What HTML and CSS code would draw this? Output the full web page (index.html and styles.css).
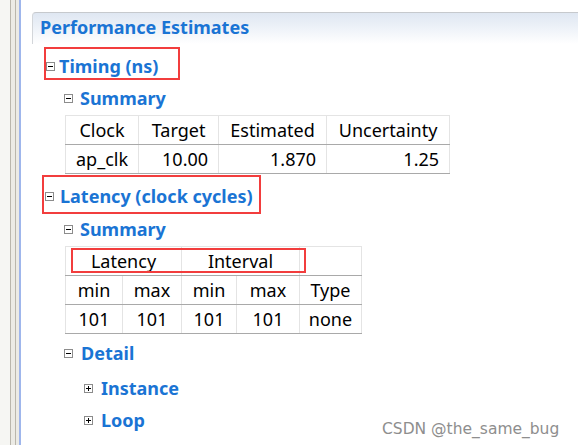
FILE: index.html
```html
<!DOCTYPE html>
<html>
<head>
<meta charset="utf-8">
<link rel="stylesheet" href="styles.css">
</head>
<body>
<div class="page">
  <div class="gutter"></div>
  <div class="main">
    <div class="panel-head"><h1 class="title">Performance Estimates</h1></div>

    <div class="h2 mark mark-timing">
      <svg class="tog" viewBox="0 0 9 9" width="9" height="9"><rect x="0.5" y="0.5" width="8" height="8" fill="#fff" stroke="#8c8c8c"/><path d="M2 4.5H7" stroke="#000"/></svg>
      <span>Timing (ns)</span>
    </div>
    <div class="h3 sum1">
      <svg class="tog" viewBox="0 0 9 9" width="9" height="9"><rect x="0.5" y="0.5" width="8" height="8" fill="#fff" stroke="#8c8c8c"/><path d="M2 4.5H7" stroke="#000"/></svg>
      <span>Summary</span>
    </div>
    <table class="grid timing">
      <tr><td class="t1">Clock</td><td class="t2">Target</td><td class="t3">Estimated</td><td class="t4">Uncertainty</td></tr>
      <tr><td>ap_clk</td><td class="num">10.00</td><td class="num">1.870</td><td class="num">1.25</td></tr>
    </table>

    <div class="h2 mark mark-latency">
      <svg class="tog" viewBox="0 0 9 9" width="9" height="9"><rect x="0.5" y="0.5" width="8" height="8" fill="#fff" stroke="#8c8c8c"/><path d="M2 4.5H7" stroke="#000"/></svg>
      <span>Latency (clock cycles)</span>
    </div>
    <div class="h3 sum2">
      <svg class="tog" viewBox="0 0 9 9" width="9" height="9"><rect x="0.5" y="0.5" width="8" height="8" fill="#fff" stroke="#8c8c8c"/><path d="M2 4.5H7" stroke="#000"/></svg>
      <span>Summary</span>
    </div>
    <div class="lat-wrap">
      <table class="grid latency">
        <tr><td colspan="2">Latency</td><td colspan="2">Interval</td><td class="blank"></td></tr>
        <tr><td class="l1">min</td><td class="l2">max</td><td class="l3">min</td><td class="l4">max</td><td class="l5">Type</td></tr>
        <tr><td>101</td><td>101</td><td>101</td><td>101</td><td>none</td></tr>
      </table>
      <div class="hl-box"></div>
    </div>

    <div class="h3 detail">
      <svg class="tog" viewBox="0 0 9 9" width="9" height="9"><rect x="0.5" y="0.5" width="8" height="8" fill="#fff" stroke="#8c8c8c"/><path d="M2 4.5H7" stroke="#000"/></svg>
      <span>Detail</span>
    </div>
    <div class="h4 inst">
      <svg class="tog" viewBox="0 0 9 9" width="9" height="9"><rect x="0.5" y="0.5" width="8" height="8" fill="#fff" stroke="#8c8c8c"/><path d="M2 4.5H7M4.5 2V7" stroke="#000"/></svg>
      <span>Instance</span>
    </div>
    <div class="h4 loop">
      <svg class="tog" viewBox="0 0 9 9" width="9" height="9"><rect x="0.5" y="0.5" width="8" height="8" fill="#fff" stroke="#8c8c8c"/><path d="M2 4.5H7M4.5 2V7" stroke="#000"/></svg>
      <span>Loop</span>
    </div>
  </div>
</div>
<div class="watermark">CSDN @the_same_bug</div>
</body>
</html>
```

FILE: styles.css
```css
html, body {
  margin: 0;
  padding: 0;
  background: #fff;
  overflow: hidden;
}
body {
  width: 578px;
  height: 445px;
  position: relative;
  font-family: "Noto Sans", "Open Sans", sans-serif;
}
.page {
  display: flex;
  height: 445px;
}
.gutter {
  width: 22px;
  flex: none;
  background: linear-gradient(to right,
    #f6f6f3 0, #f6f6f3 10px,
    #b9b6ac 10px, #b9b6ac 11px,
    #ecebe5 11px, #ecebe5 15px,
    #b9b6ac 15px, #b9b6ac 16px,
    #ecebe5 16px, #ecebe5 19px,
    #9fb6ec 19px, #9fb6ec 21px,
    #ffffff 21px);
}
.main {
  flex: 1;
  display: flex;
  flex-direction: column;
  align-items: flex-start;
  min-width: 0;
}
.panel-head {
  margin-top: 12px;
  margin-left: 10px;
  align-self: stretch;
  border-top: 1px solid #c6c9cd;
  border-left: 1px solid #d3d6da;
  border-top-left-radius: 4px;
  background: linear-gradient(to bottom, #dfe7f2 0, #ebf0f7 40%, #ffffff 100%);
  padding-top: 2px;
  padding-left: 7px;
  box-sizing: border-box;
  height: 32px;
}
.title {
  margin: 0;
  font-size: 18px;
  line-height: 24px;
  font-weight: 700;
  color: #1a74d4;
}
.h2, .h3, .h4 {
  display: flex;
  align-items: center;
  font-size: 18px;
  line-height: 24px;
  font-weight: 700;
  color: #1a74d4;
}
.tog {
  flex: none;
  display: block;
}
.mark {
  border: 2px solid #f23d3d;
}
.mark-timing {
  margin-top: 3px;
  margin-left: 22px;
  padding: 5px 20px 0 0;
  gap: 4px;
}
.mark-latency {
  margin-top: 1px;
  margin-left: 20px;
  padding: 7px 6px 4px 1px;
  gap: 6px;
}
.h3 {
  margin-left: 42px;
  gap: 7px;
}
.sum1 { margin-top: 6px; }
.sum2 { margin-top: 3px; }
.detail { margin-top: 7px; gap: 8px; }
.h4 {
  margin-left: 62px;
  gap: 8px;
}
.inst { margin-top: 11px; }
.loop { margin-top: 8px; }

.grid {
  border-collapse: collapse;
  font-size: 18px;
  color: #000;
  table-layout: fixed;
}
.grid td {
  border: 1px solid #e4e4e4;
  border-bottom: 1px solid #a9a9a9;
  height: 29px;
  padding: 0 10px;
  text-align: center;
  vertical-align: middle;
  white-space: nowrap;
  box-sizing: border-box;
}
.grid td.num { text-align: right; }
.timing {
  margin-top: 5px;
  margin-left: 43px;
}
.t1 { width: 72px; }
.t2 { width: 80px; }
.t3 { width: 108px; }
.t4 { width: 123px; }

.lat-wrap {
  position: relative;
  margin-top: 5px;
  margin-left: 43px;
}
.l1 { width: 57px; }
.l2 { width: 59px; }
.l3 { width: 55px; }
.l4 { width: 63px; }
.l5 { width: 62px; }
.latency td { padding: 0 4px; }
.hl-box {
  position: absolute;
  left: 6px;
  top: 2px;
  width: 235px;
  height: 25px;
  border: 2px solid #f23d3d;
  box-sizing: border-box;
}
.watermark {
  position: absolute;
  left: 382px;
  top: 419px;
  font-family: "DejaVu Sans", sans-serif;
  font-size: 15.5px;
  line-height: 20px;
  color: #8e8e8e;
  white-space: nowrap;
}
```
